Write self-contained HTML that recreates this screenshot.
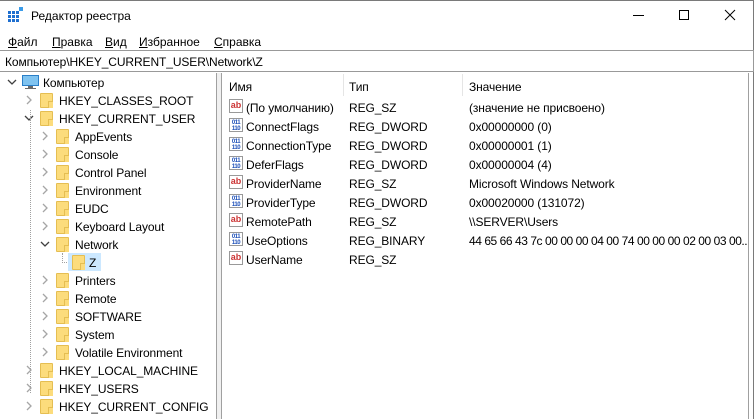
<!DOCTYPE html>
<html><head><meta charset="utf-8"><style>
*{margin:0;padding:0;box-sizing:border-box}
body{width:754px;height:419px;background:#fff;font-family:"Liberation Sans",sans-serif;font-size:12px;color:#000;position:relative;overflow:hidden}
.a{position:absolute;white-space:nowrap}
.t{position:absolute;white-space:nowrap;line-height:18px;height:18px;top:0;letter-spacing:-0.1px}
.f{position:absolute;width:13px;height:15px;background:#fcdc7c;border:1px solid #e5be52;border-radius:1px}
.f:after{content:"";position:absolute;right:-1px;bottom:-1px;width:4px;height:6px;border-left:1px solid #e5be52;border-top:1px solid #e5be52;background:#fcdc7c}
.c{position:absolute;width:6px;height:9px}
.ab{position:absolute;width:14px;height:14px;border:1px solid #999;background:#fff;color:#c33;font-size:9px;font-weight:bold;line-height:11px;text-align:center}
.bn{position:absolute;width:14px;height:14px;border:1px solid #999;background:#fff;color:#1c4fb8;font-size:6px;font-weight:bold;line-height:6px;text-align:center;padding-top:1px;letter-spacing:-0.5px}
u{text-decoration:underline}
#rp{position:absolute;left:222px;top:73px;width:526px;height:346px;overflow:hidden}
#rp .t,#rp .ab,#rp .bn{margin-left:-222px;margin-top:-73px}
</style></head><body>
<div class="a" style="left:0;top:0;width:754px;height:1px;background:#7a7a7a"></div>
<div class="a" style="left:753px;top:0;width:1px;height:419px;background:#7a7a7a"></div>
<svg class="a" style="left:8px;top:7px" width="16" height="16"><g fill="#1e6fd0"><rect x="0" y="4" width="3" height="3"/><rect x="4" y="4" width="3" height="3"/><rect x="8" y="4" width="3" height="3"/><rect x="0" y="8" width="3" height="3"/><rect x="4" y="8" width="3" height="3"/><rect x="8" y="8" width="3" height="3"/><rect x="0" y="12" width="3" height="3"/><rect x="4" y="12" width="3" height="3"/><rect x="8" y="12" width="3" height="3"/></g><rect x="11" y="0" width="4" height="4" fill="#3a9be8"/></svg>
<div class="a" style="left:31px;top:9px;font-size:12px">Редактор реестра</div>
<div class="a" style="left:633px;top:15px;width:11px;height:1px;background:#000"></div>
<div class="a" style="left:679px;top:10px;width:10px;height:10px;border:1px solid #000"></div>
<svg class="a" style="left:724px;top:9px" width="12" height="12"><path d="M1 1L11 11M11 1L1 11" stroke="#000" stroke-width="1"/></svg>
<div class="a" style="left:8px;top:35px"><u>Ф</u>айл</div>
<div class="a" style="left:52px;top:35px"><u>П</u>равка</div>
<div class="a" style="left:105px;top:35px"><u>В</u>ид</div>
<div class="a" style="left:139px;top:35px"><u>И</u>збранное</div>
<div class="a" style="left:214px;top:35px"><u>С</u>правка</div>
<div class="a" style="left:0;top:50px;width:754px;height:22px;border-top:1px solid #999;border-bottom:1px solid #999;border-right:1px solid #999"></div>
<div class="a" style="left:5px;top:55px;letter-spacing:-0.1px">Компьютер\HKEY_CURRENT_USER\Network\Z</div>
<div class="a" style="left:216px;top:73px;width:1px;height:346px;background:#a0a0a0"></div>
<div class="a" style="left:221px;top:73px;width:1px;height:346px;background:#a0a0a0"></div>
<div class="a" style="left:217px;top:73px;width:4px;height:346px;background:#f0f0f0"></div>
<div class="a" style="left:748px;top:73px;width:1px;height:346px;background:#a0a0a0"></div>
<svg class="a" style="left:0;top:73px" width="110" height="346">
<g fill="none" stroke="#404040" stroke-width="1.3"><path d="M8 7L12 11L16 7"/><path d="M25 43L29 47L33 43"/><path d="M41 169L45 173L49 169"/></g>
<g fill="none" stroke="#a6a6a6" stroke-width="1.3"><path d="M27 23L31 27L27 31"/>
<path d="M43 59L47 63L43 67"/><path d="M43 77L47 81L43 85"/><path d="M43 95L47 99L43 103"/><path d="M43 113L47 117L43 121"/><path d="M43 131L47 135L43 139"/><path d="M43 149L47 153L43 157"/>
<path d="M43 203L47 207L43 211"/><path d="M43 221L47 225L43 229"/><path d="M43 239L47 243L43 247"/><path d="M43 257L47 261L43 265"/><path d="M43 275L47 279L43 283"/>
<path d="M27 293L31 297L27 301"/><path d="M27 311L31 315L27 319"/><path d="M27 329L31 333L27 337"/></g>
</svg>
<svg class="a" style="left:22px;top:75px" width="17" height="15"><rect x="0.5" y="0.5" width="16" height="10" fill="#7fc3f0" stroke="#2a7fc8"/><rect x="6" y="11" width="5" height="2" fill="#6a6a6a"/><rect x="3" y="13" width="11" height="1" fill="#6a6a6a"/></svg>
<div class="t" style="left:43px;top:74px">Компьютер</div>
<div class="a" style="left:30px;top:110px;width:0;height:283px;border-left:1px dotted #a0a0a0"></div>
<div class="a" style="left:62px;top:253px;width:0;height:10px;border-left:1px dotted #a0a0a0"></div>
<div class="a" style="left:62px;top:262px;width:7px;height:0;border-top:1px dotted #a0a0a0"></div>
<div class="a" style="left:68px;top:253px;width:33px;height:18px;background:#cce8ff"></div>

<div class="f" style="left:40px;top:93px"></div><div class="t" style="left:59px;top:92px">HKEY_CLASSES_ROOT</div>
<div class="f" style="left:40px;top:111px"></div><div class="t" style="left:59px;top:110px">HKEY_CURRENT_USER</div>
<div class="f" style="left:56px;top:129px"></div><div class="t" style="left:75px;top:128px">AppEvents</div>
<div class="f" style="left:56px;top:147px"></div><div class="t" style="left:75px;top:146px">Console</div>
<div class="f" style="left:56px;top:165px"></div><div class="t" style="left:75px;top:164px">Control Panel</div>
<div class="f" style="left:56px;top:183px"></div><div class="t" style="left:75px;top:182px">Environment</div>
<div class="f" style="left:56px;top:201px"></div><div class="t" style="left:75px;top:200px">EUDC</div>
<div class="f" style="left:56px;top:219px"></div><div class="t" style="left:75px;top:218px">Keyboard Layout</div>
<div class="f" style="left:56px;top:237px"></div><div class="t" style="left:75px;top:236px">Network</div>
<div class="f" style="left:72px;top:255px"></div><div class="t" style="left:89px;top:254px">Z</div>
<div class="f" style="left:56px;top:273px"></div><div class="t" style="left:75px;top:272px">Printers</div>
<div class="f" style="left:56px;top:291px"></div><div class="t" style="left:75px;top:290px">Remote</div>
<div class="f" style="left:56px;top:309px"></div><div class="t" style="left:75px;top:308px">SOFTWARE</div>
<div class="f" style="left:56px;top:327px"></div><div class="t" style="left:75px;top:326px">System</div>
<div class="f" style="left:56px;top:345px"></div><div class="t" style="left:75px;top:344px">Volatile Environment</div>
<div class="f" style="left:40px;top:363px"></div><div class="t" style="left:59px;top:362px">HKEY_LOCAL_MACHINE</div>
<div class="f" style="left:40px;top:381px"></div><div class="t" style="left:59px;top:380px">HKEY_USERS</div>
<div class="f" style="left:40px;top:399px"></div><div class="t" style="left:59px;top:398px">HKEY_CURRENT_CONFIG</div>

<div id="rp">
<div class="a" style="left:121px;top:1px;width:1px;height:22px;background:#e5e5e5"></div>
<div class="a" style="left:240px;top:1px;width:1px;height:22px;background:#e5e5e5"></div>
<div class="t" style="left:229px;top:78px">Имя</div>
<div class="t" style="left:349px;top:78px">Тип</div>
<div class="t" style="left:469px;top:78px">Значение</div>
<div class="ab" style="left:229px;top:99px">ab</div><div class="t" style="left:246px;top:99px">(По умолчанию)</div><div class="t" style="left:349px;top:99px">REG_SZ</div><div class="t" style="left:469px;top:99px">(значение не присвоено)</div>
<div class="bn" style="left:229px;top:118px">011<br>110</div><div class="t" style="left:246px;top:118px">ConnectFlags</div><div class="t" style="left:349px;top:118px">REG_DWORD</div><div class="t" style="left:469px;top:118px">0x00000000 (0)</div>
<div class="bn" style="left:229px;top:137px">011<br>110</div><div class="t" style="left:246px;top:137px">ConnectionType</div><div class="t" style="left:349px;top:137px">REG_DWORD</div><div class="t" style="left:469px;top:137px">0x00000001 (1)</div>
<div class="bn" style="left:229px;top:156px">011<br>110</div><div class="t" style="left:246px;top:156px">DeferFlags</div><div class="t" style="left:349px;top:156px">REG_DWORD</div><div class="t" style="left:469px;top:156px">0x00000004 (4)</div>
<div class="ab" style="left:229px;top:175px">ab</div><div class="t" style="left:246px;top:175px">ProviderName</div><div class="t" style="left:349px;top:175px">REG_SZ</div><div class="t" style="left:469px;top:175px">Microsoft Windows Network</div>
<div class="bn" style="left:229px;top:194px">011<br>110</div><div class="t" style="left:246px;top:194px">ProviderType</div><div class="t" style="left:349px;top:194px">REG_DWORD</div><div class="t" style="left:469px;top:194px">0x00020000 (131072)</div>
<div class="ab" style="left:229px;top:213px">ab</div><div class="t" style="left:246px;top:213px">RemotePath</div><div class="t" style="left:349px;top:213px">REG_SZ</div><div class="t" style="left:469px;top:213px">\\SERVER\Users</div>
<div class="bn" style="left:229px;top:232px">011<br>110</div><div class="t" style="left:246px;top:232px">UseOptions</div><div class="t" style="left:349px;top:232px">REG_BINARY</div><div class="t" style="left:469px;top:232px;letter-spacing:-0.45px">44 65 66 43 7c 00 00 00 04 00 74 00 00 00 02 00 03 00...</div>
<div class="ab" style="left:229px;top:251px">ab</div><div class="t" style="left:246px;top:251px">UserName</div><div class="t" style="left:349px;top:251px">REG_SZ</div>
</div>
</body></html>
